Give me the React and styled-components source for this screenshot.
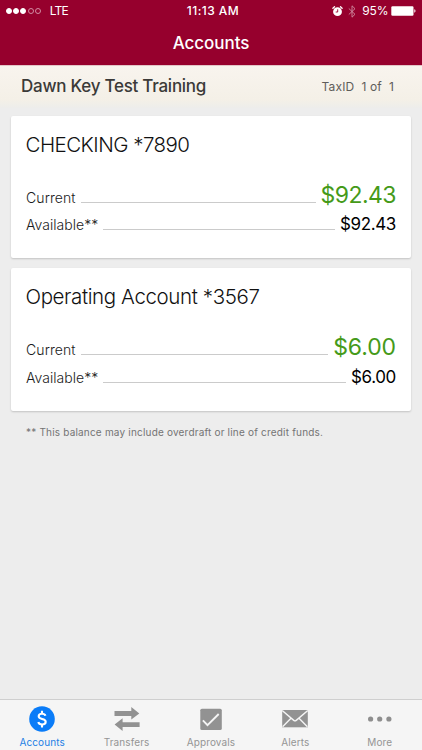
import styled, { createGlobalStyle } from "styled-components";

const accounts = [
  { name: "CHECKING *7890", balance: "$92.43", spacing: "-0.53px", balanceSpacing: "-0.55px" },
  { name: "Operating Account *3567", balance: "$6.00", spacing: "-0.39px", balanceSpacing: "-0.1px" },
];

const AlarmIcon = () => (
  <svg width="11" height="11" viewBox="0 0 11 11" fill="none">
    <circle cx="5.5" cy="5.7" r="4.4" fill="#fff" />
    <path d="M0.9 2.2 2.5 0.8M10.1 2.2 8.5 0.8" stroke="#fff" strokeWidth="1.3" strokeLinecap="round" />
    <path d="M5.7 3.3V6H3.7" stroke="#96002d" strokeWidth="0.9" />
  </svg>
);

const BluetoothIcon = () => (
  <svg width="8" height="13" viewBox="0 0 8 13" fill="none">
    <path d="M0.8 3.5 7 9.3 4 12.2V0.8L7 3.7 0.8 9.5" stroke="#d08ca2" strokeWidth="0.9" />
  </svg>
);

const BatteryIcon = () => (
  <svg width="25" height="10" viewBox="0 0 25 10">
    <rect x="0.3" y="0.3" width="22.2" height="9.4" rx="1.2" fill="#fff" />
    <path d="M23.3 3.3c1.6.3 1.6 3.1 0 3.4z" fill="#fff" />
  </svg>
);

const DollarIcon = () => (
  <svg width="26" height="26" viewBox="0 0 26 26" fill="none">
    <circle cx="13" cy="13" r="12.8" fill="#0a7cf8" />
    <path
      d="M16.4 9.8C16 8.4 14.8 7.7 13 7.7c-2 0-3.3 1-3.3 2.5 0 1.6 1.4 2.2 3.4 2.7 2.2.5 3.6 1.2 3.6 2.9 0 1.7-1.5 2.7-3.6 2.7-2.1 0-3.4-.9-3.8-2.5"
      stroke="#fff"
      strokeWidth="2.1"
    />
    <path d="M13 4.7V8M13 18v3.4" stroke="#fff" strokeWidth="2.1" />
  </svg>
);

const TransferIcon = () => (
  <svg width="26" height="26" viewBox="0 0 26 26" fill="#929292">
    <path d="M0.5 5.1h16.8V1L25.3 7.5l-8 6V10H0.5z" />
    <path d="M25.6 16.2H8.6v-4L0.6 18.5l8 6.4v-4h17z" />
  </svg>
);

const ApprovalIcon = () => (
  <svg width="26" height="26" viewBox="0 0 26 26" fill="none">
    <rect x="2.3" y="2.7" width="21.5" height="21.3" rx="1.6" fill="#929292" />
    <path d="M4.9 14.3 9.5 19.2 20.7 8" stroke="#f5f5f5" strokeWidth="1.9" />
  </svg>
);

const MailIcon = () => (
  <svg width="26" height="26" viewBox="0 0 26 26" fill="none">
    <rect x="0.2" y="4" width="25.6" height="17.3" fill="#929292" />
    <path
      d="M0.2 4.6 11.8 14.4q1.2 1 2.4 0L25.8 4.6M0.6 20.8 9 12.2M25.4 20.8 17 12.2"
      stroke="#f5f5f5"
      strokeWidth="1.4"
    />
  </svg>
);

const MoreIcon = () => (
  <svg width="26" height="26" viewBox="0 0 26 26" fill="#8e8e8e">
    <circle cx="3.6" cy="13" r="2.6" />
    <circle cx="12.7" cy="13" r="2.6" />
    <circle cx="21.9" cy="13" r="2.6" />
  </svg>
);

const tabs = [
  { label: "Accounts", Icon: DollarIcon },
  { label: "Transfers", Icon: TransferIcon },
  { label: "Approvals", Icon: ApprovalIcon },
  { label: "Alerts", Icon: MailIcon },
  { label: "More", Icon: MoreIcon },
];

const AccountCard = ({ name, balance, spacing, balanceSpacing }) => (
  <StCard>
    <StAccountName $spacing={spacing}>{name}</StAccountName>
    <StBalanceRow $height="29.4px">
      <StLabel $spacing="0.1px">Current</StLabel>
      <StLeader />
      <StCurrent $spacing={balanceSpacing}>{balance}</StCurrent>
    </StBalanceRow>
    <StBalanceRow $height="27.5px">
      <StLabel $spacing="0.03px">Available**</StLabel>
      <StLeader />
      <StAvailable>{balance}</StAvailable>
    </StBalanceRow>
  </StCard>
);

const App = () => {
  const activeTab = "Accounts";

  return (
    <StPage>
      <GlobalStyle />
      <StHeader>
        <StStatusBar>
          <StCarrier>
            <StSignal>
              <StDot $on />
              <StDot $on />
              <StDot $on />
              <StDot />
              <StDot />
            </StSignal>
            LTE
          </StCarrier>
          <StTime>11:13 AM</StTime>
          <StStatusIcons>
            <AlarmIcon />
            <BluetoothIcon />
            <StPercent>95%</StPercent>
            <BatteryIcon />
          </StStatusIcons>
        </StStatusBar>
        <StTitle>Accounts</StTitle>
      </StHeader>

      <StCompany>
        <StCompanyName>Dawn Key Test Training</StCompanyName>
        <StTaxId>TaxID{"  "}1 of{"  "}1</StTaxId>
      </StCompany>

      <StContents>
        {accounts.map((account) => (
          <AccountCard key={account.name} {...account} />
        ))}
        <StNote>** This balance may include overdraft or line of credit funds.</StNote>
      </StContents>

      <StTabBar>
        {tabs.map(({ label, Icon }) => (
          <StTab key={label} $active={label === activeTab}>
            <Icon />
            <span>{label}</span>
          </StTab>
        ))}
      </StTabBar>
    </StPage>
  );
};

export default App;

const GlobalStyle = createGlobalStyle`
  * {
    box-sizing: border-box;
  }

  body {
    margin: 0;
    font-family: Inter, "Liberation Sans", sans-serif;
  }

  svg {
    display: block;
    flex: none;
  }
`;

const StPage = styled.div`
  display: flex;
  flex-direction: column;
  height: 750px;
  overflow: hidden;
  background: #ededed;
`;

const StHeader = styled.header`
  flex: none;
  height: 65px;
  color: #fff;
  background: #96002d;
`;

const StStatusBar = styled.div`
  display: grid;
  grid-template-columns: 1fr auto 1fr;
  align-items: center;
  height: 22px;
  padding: 0 6px;
  font-size: 12px;
  line-height: 22px;
`;

const StCarrier = styled.div`
  display: flex;
  align-items: center;
  gap: 9px;
  letter-spacing: -0.8px;
`;

const StSignal = styled.div`
  display: flex;
  gap: 1.2px;
`;

const StDot = styled.i`
  width: 6px;
  height: 6px;
  border: 0.8px solid ${({ $on }) => ($on ? "#fff" : "#d08ca2")};
  border-radius: 50%;
  background: ${({ $on }) => ($on ? "#fff" : "transparent")};
`;

const StTime = styled.div`
  padding-left: 4px;
  font-weight: 500;
  letter-spacing: 0.45px;
`;

const StStatusIcons = styled.div`
  display: flex;
  align-items: center;
  justify-content: flex-end;
  gap: 5px;
`;

const StPercent = styled.span`
  margin: 0 -2.5px 0 1.5px;
  letter-spacing: -0.1px;
`;

const StTitle = styled.h1`
  margin: 0;
  font-size: 17px;
  font-weight: 500;
  letter-spacing: -0.05px;
  line-height: 43px;
  text-align: center;
`;

const StCompany = styled.div`
  display: flex;
  flex: none;
  align-items: center;
  justify-content: space-between;
  height: 43px;
  padding: 0 28px 2px 21px;
  border-top: 1px solid #e3c5c7;
  background: linear-gradient(#f8f4ee, #f4f0e7 80%, #ededeb);
`;

const StCompanyName = styled.div`
  color: #3b3a38;
  font-size: 17px;
  font-weight: 500;
  letter-spacing: -0.26px;
`;

const StTaxId = styled.div`
  color: #5f5d5a;
  font-size: 12px;
  letter-spacing: 0.15px;
  white-space: pre;
`;

const StContents = styled.main`
  display: flex;
  flex: 1;
  flex-direction: column;
  gap: 10px;
  padding: 8px 11px 0;
`;

const StCard = styled.section`
  height: 142.4px;
  padding: 16px 15px 0;
  border-radius: 2px;
  background: #fff;
  box-shadow: 0 1px 2px rgba(0, 0, 0, 0.18);
`;

const StAccountName = styled.h2`
  margin: 0 0 24px -0.5px;
  color: #111;
  font-size: 20.5px;
  font-weight: 300;
  letter-spacing: ${({ $spacing }) => $spacing};
  line-height: 26px;
  white-space: nowrap;
`;

const StBalanceRow = styled.div`
  display: flex;
  align-items: baseline;
  height: ${({ $height }) => $height};
  line-height: 27px;
`;

const StLabel = styled.span`
  color: #1c1c1c;
  font-size: 14px;
  font-weight: 300;
  letter-spacing: ${({ $spacing }) => $spacing};
`;

const StLeader = styled.span`
  flex: 1;
  height: 1px;
  margin: 0 5px;
  background: #cbcbcb;
`;

const StCurrent = styled.span`
  color: #459a19;
  font-size: 23px;
  letter-spacing: ${({ $spacing }) => $spacing};
`;

const StAvailable = styled.span`
  color: #000;
  font-size: 17px;
  letter-spacing: -0.35px;
`;

const StNote = styled.p`
  margin: 4px 0 0 15px;
  color: #747474;
  font-size: 10px;
  letter-spacing: 0.19px;
  line-height: 14px;
  white-space: nowrap;
`;

const StTabBar = styled.nav`
  display: grid;
  flex: none;
  grid-template-columns: repeat(5, 1fr);
  height: 51px;
  border-top: 1px solid #cfcfcf;
  background: #f5f5f5;
`;

const StTab = styled.div`
  display: flex;
  flex-direction: column;
  align-items: center;
  gap: 3px;
  padding-top: 6px;
  color: ${({ $active }) => ($active ? "#237fe5" : "#949494")};
  font-size: 10px;
  letter-spacing: 0.1px;
  line-height: 15px;
`;
